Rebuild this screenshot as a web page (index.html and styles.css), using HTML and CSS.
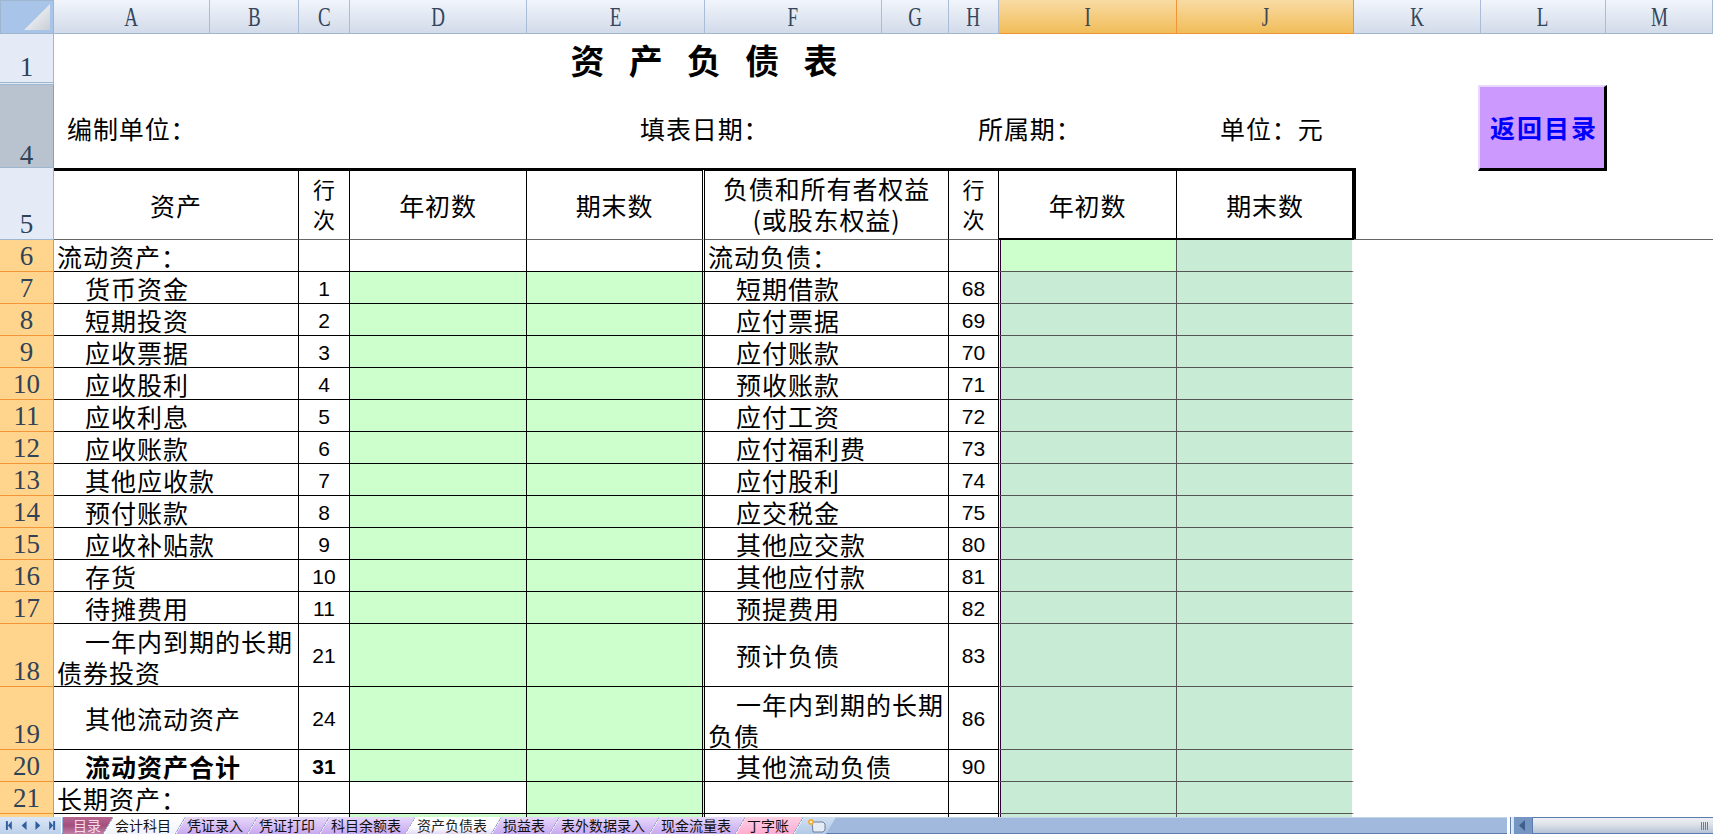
FILE: index.html
```html
<!DOCTYPE html>
<html lang="zh-CN">
<head>
<meta charset="utf-8">
<title>资产负债表</title>
<link rel="stylesheet" href="styles.css">
</head>
<body>
<div class="app">
  <div class="sheet">
    <div class="row row-cols">
      <div class="corner"><svg class="corner-mark" width="26" height="26" viewBox="0 0 26 26"><defs><linearGradient id="cg" x1="0" y1="0" x2="1" y2="1"><stop offset="0" stop-color="#ffffff"/><stop offset="1" stop-color="#c9ced6"/></linearGradient></defs><polygon points="26,0 26,26 0,26" fill="url(#cg)"/></svg></div>
      <div class="ch"><span>A</span></div><div class="ch"><span>B</span></div><div class="ch"><span>C</span></div><div class="ch"><span>D</span></div><div class="ch"><span>E</span></div><div class="ch"><span>F</span></div><div class="ch"><span>G</span></div><div class="ch"><span>H</span></div><div class="ch ch-sel"><span>I</span></div><div class="ch ch-sel"><span>J</span></div><div class="ch"><span>K</span></div><div class="ch"><span>L</span></div><div class="ch"><span>M</span></div>
    </div>

    <div class="row row-title">
      <div class="rh rh-split">1</div>
      <div class="title">资 产 负 债 表</div>
    </div>

    <div class="row row-info">
      <div class="rh rh-grey">4</div>
      <div class="info info-unit">编制单位：</div>
      <div class="info info-date">填表日期：</div>
      <div class="info info-period">所属期：</div>
      <div class="info info-yuan">单位：元</div>
      <div class="back">返回目录</div>
    </div>

    <div class="row row-head">
      <div class="rh">5</div>
      <div class="th s2">资产</div>
      <div class="th th-small">行<br>次</div>
      <div class="th">年初数</div>
      <div class="th th-e">期末数</div>
      <div class="th s2 th-two">负债和所有者权益<br>(或股东权益)</div>
      <div class="th th-small">行<br>次</div>
      <div class="th th-i">年初数</div>
      <div class="th th-j">期末数</div>
      <div class="th-tail"></div>
    </div>

    <div class="row"><div class="rh hi">6</div><div class="c s2 lab">流动资产：</div><div class="c no"></div><div class="c"></div><div class="c e"></div><div class="c s2 lab">流动负债：</div><div class="c no"></div><div class="c i g"></div><div class="c j"></div></div>
    <div class="row"><div class="rh hi">7</div><div class="c s2 ind">货币资金</div><div class="c no">1</div><div class="c g"></div><div class="c g e"></div><div class="c s2 ind">短期借款</div><div class="c no">68</div><div class="c i"></div><div class="c j"></div></div>
    <div class="row"><div class="rh hi">8</div><div class="c s2 ind">短期投资</div><div class="c no">2</div><div class="c g"></div><div class="c g e"></div><div class="c s2 ind">应付票据</div><div class="c no">69</div><div class="c i"></div><div class="c j"></div></div>
    <div class="row"><div class="rh hi">9</div><div class="c s2 ind">应收票据</div><div class="c no">3</div><div class="c g"></div><div class="c g e"></div><div class="c s2 ind">应付账款</div><div class="c no">70</div><div class="c i"></div><div class="c j"></div></div>
    <div class="row"><div class="rh hi">10</div><div class="c s2 ind">应收股利</div><div class="c no">4</div><div class="c g"></div><div class="c g e"></div><div class="c s2 ind">预收账款</div><div class="c no">71</div><div class="c i"></div><div class="c j"></div></div>
    <div class="row"><div class="rh hi">11</div><div class="c s2 ind">应收利息</div><div class="c no">5</div><div class="c g"></div><div class="c g e"></div><div class="c s2 ind">应付工资</div><div class="c no">72</div><div class="c i"></div><div class="c j"></div></div>
    <div class="row"><div class="rh hi">12</div><div class="c s2 ind">应收账款</div><div class="c no">6</div><div class="c g"></div><div class="c g e"></div><div class="c s2 ind">应付福利费</div><div class="c no">73</div><div class="c i"></div><div class="c j"></div></div>
    <div class="row"><div class="rh hi">13</div><div class="c s2 ind">其他应收款</div><div class="c no">7</div><div class="c g"></div><div class="c g e"></div><div class="c s2 ind">应付股利</div><div class="c no">74</div><div class="c i"></div><div class="c j"></div></div>
    <div class="row"><div class="rh hi">14</div><div class="c s2 ind">预付账款</div><div class="c no">8</div><div class="c g"></div><div class="c g e"></div><div class="c s2 ind">应交税金</div><div class="c no">75</div><div class="c i"></div><div class="c j"></div></div>
    <div class="row"><div class="rh hi">15</div><div class="c s2 ind">应收补贴款</div><div class="c no">9</div><div class="c g"></div><div class="c g e"></div><div class="c s2 ind">其他应交款</div><div class="c no">80</div><div class="c i"></div><div class="c j"></div></div>
    <div class="row"><div class="rh hi">16</div><div class="c s2 ind">存货</div><div class="c no">10</div><div class="c g"></div><div class="c g e"></div><div class="c s2 ind">其他应付款</div><div class="c no">81</div><div class="c i"></div><div class="c j"></div></div>
    <div class="row"><div class="rh hi">17</div><div class="c s2 ind">待摊费用</div><div class="c no">11</div><div class="c g"></div><div class="c g e"></div><div class="c s2 ind">预提费用</div><div class="c no">82</div><div class="c i"></div><div class="c j"></div></div>
    <div class="row row-tall"><div class="rh hi">18</div><div class="c s2 ind wrap">一年内到期的长期债券投资</div><div class="c no">21</div><div class="c g"></div><div class="c g e"></div><div class="c s2 ind mid">预计负债</div><div class="c no">83</div><div class="c i"></div><div class="c j"></div></div>
    <div class="row row-tall"><div class="rh hi">19</div><div class="c s2 ind mid">其他流动资产</div><div class="c no">24</div><div class="c g"></div><div class="c g e"></div><div class="c s2 ind wrap">一年内到期的长期负债</div><div class="c no">86</div><div class="c i"></div><div class="c j"></div></div>
    <div class="row"><div class="rh hi">20</div><div class="c s2 ind bold">流动资产合计</div><div class="c no bold">31</div><div class="c g"></div><div class="c g e"></div><div class="c s2 ind">其他流动负债</div><div class="c no">90</div><div class="c i"></div><div class="c j"></div></div>
    <div class="row"><div class="rh hi">21</div><div class="c s2 lab">长期资产：</div><div class="c no"></div><div class="c"></div><div class="c g e"></div><div class="c s2 lab"></div><div class="c no"></div><div class="c i"></div><div class="c j"></div></div>
    <div class="row"><div class="rh hi"></div><div class="c s2 lab"></div><div class="c no"></div><div class="c g"></div><div class="c g e"></div><div class="c s2 lab"></div><div class="c no"></div><div class="c i"></div><div class="c j"></div></div>
  </div>

  <div class="statusbar">
    <div class="nav">
      <svg width="62" height="17" viewBox="0 0 62 17"><g fill="#2f5e9e"><rect x="6" y="4" width="2" height="9"/><polygon points="12,4 12,13 8,8.5"/><polygon points="27,4 27,13 22,8.5"/><polygon points="36,4 36,13 41,8.5"/><polygon points="50,4 50,13 54,8.5"/><rect x="54" y="4" width="2" height="9"/></g></svg>
    </div>
    <div class="tabs">
      <div class="tab tab-first">目录</div>
      <div class="tab tab-white">会计科目</div>
      <div class="tab tab-lav">凭证录入</div>
      <div class="tab tab-lav">凭证打印</div>
      <div class="tab tab-lav">科目余额表</div>
      <div class="tab tab-active">资产负债表</div>
      <div class="tab tab-lav">损益表</div>
      <div class="tab tab-lav">表外数据录入</div>
      <div class="tab tab-lav">现金流量表</div>
      <div class="tab tab-pink">丁字账</div>
      <div class="tab tab-new"><svg width="24" height="15" viewBox="0 0 24 15"><path d="M8 4h11l2 2v6l-2 2H9z" fill="#e4ecf6" stroke="#6f7f96"/><circle cx="7" cy="4" r="3" fill="#f0b040"/><circle cx="7" cy="4" r="1" fill="#fff"/></svg></div>
    </div>
    <div class="strip"></div>
    <div class="split"></div>
    <div class="scroll-left"><svg width="18" height="17" viewBox="0 0 18 17"><polygon points="11,3 11,14 5,8.5" fill="#3f5f8c"/></svg></div>
    <div class="track"><svg class="grip" width="8" height="8" viewBox="0 0 8 8"><path d="M0.5 0v8M2.5 0v8M4.5 0v8M6.5 0v8" stroke="#6f7f90"/></svg></div>
  </div>
</div>
</body>
</html>
```

FILE: styles.css
```css
html, body { margin: 0; padding: 0; background: #fff; }
body { overflow: hidden; font-family: "Noto Sans CJK SC", "Liberation Sans", sans-serif; color: #000; }
.app { width: 1713px; height: 834px; display: flex; flex-direction: column; overflow: hidden; }
.sheet { flex: 1; min-height: 0; overflow: hidden; background: #fff; }

.row {
  display: grid;
  grid-template-columns: 54px 156px 89px 51px 177px 178px 177px 67px 50px 178px 177px 127px 125px 107px;
  grid-template-rows: minmax(0, 1fr);
  height: 32px;
}
.row-cols { height: 34px; }
.row-title { height: 51px; }
.row-info { height: 83px; }
.row-head { height: 72px; }
.row-tall { height: 63px; }

/* column headers */
.corner {
  background: #a9c4e9; border: 1px solid #9eb6ce;
  box-sizing: border-box; display: flex; align-items: flex-end; justify-content: flex-end; padding: 0 3px 3px 0;
}
.corner-mark { display: block; }
.ch {
  box-sizing: border-box; border-right: 1px solid #a9bdd8; border-bottom: 1px solid #9eb6ce;
  background: linear-gradient(#f1f5fb, #d2dbea);
  display: flex; align-items: center; justify-content: center;
  font-family: "Liberation Serif", serif; font-size: 28px; color: #33465c; line-height: 34px;
}
.ch span { display: block; transform: scaleX(.68); }
.ch-sel { background: linear-gradient(#f8dba4, #f1bd59); border-right-color: #f29536; border-bottom-color: #f29536; color: #3b4652; }

/* row headers */
.rh {
  box-sizing: border-box; background: #e4ebf7; border-right: 1px solid #9eb6ce; border-bottom: 1px solid #9eb6ce;
  display: flex; align-items: flex-end; justify-content: center;
  font-family: "Liberation Serif", serif; font-size: 27px; line-height: 27px; color: #2f4258; padding-bottom: 1px;
}
.rh-split { border-bottom: 3px double #9eb6ce; padding-bottom: 1px; }
.rh-grey { background: #b9c3cf; border-right-color: #8d9dae; line-height: 21px; }
.hi { background: #ffd58d; border-right-color: #f29536; border-bottom-color: #f29536; }

/* title + info rows */
.title {
  grid-column: 2 / 12; text-align: center; font-weight: 700; font-size: 34px; line-height: 52px;
  word-spacing: 16.5px;
}
.info { font-size: 25px; letter-spacing: .9px; line-height: 30px; padding-top: 28px; white-space: nowrap; }
.info-unit { grid-column: 2 / 5; padding-left: 13px; }
.info-date { grid-column: 6 / 7; padding-left: 113px; }
.info-period { grid-column: 9 / 11; padding-left: 29px; }
.info-yuan { grid-column: 11 / 12; padding-left: 43px; }
.back {
  grid-column: 13 / 14; margin: 0 -1px -3px -3px; box-sizing: border-box; position: relative; z-index: 2;
  background: #cc99ff; border-style: solid; border-width: 2px 3px 3px 2px;
  border-color: #e6d8ff #000 #000 #e6d8ff;
  display: flex; align-items: center; justify-content: center; padding: 0 0 2px 4px;
  color: #0000ff; font-weight: 700; font-size: 25px; letter-spacing: 2px; white-space: nowrap;
}

/* table head */
.th {
  box-sizing: border-box; border-top: 3px solid #000; border-right: 1px solid #000; border-bottom: 1px solid #666;
  display: flex; align-items: center; justify-content: center; text-align: center;
  font-size: 25px; letter-spacing: .9px; line-height: 32px;
}
.th-small { font-size: 22px; line-height: 30px; letter-spacing: 0; padding-bottom: 5px; }
.th-two { padding-bottom: 3px; line-height: 31px; }
.th-e { border-right: 3px double #000; }
.th-i, .th-j { border-bottom: 2px solid #000; }
.th-j { border-right: 1px solid #000; box-shadow: inset -1px 0 0 #000, 2px 0 0 #000; }
.th-tail { grid-column: 12 / 15; border-bottom: 1px solid #666; }

/* data cells */
.s2 { grid-column: span 2; }
.c {
  box-sizing: border-box; border-right: 1px solid #000; border-bottom: 1px solid #000;
  font-size: 25px; letter-spacing: 1px; line-height: 29px; white-space: nowrap;
  display: flex; align-items: flex-end;
}
.lab { padding-left: 3px; }
.ind { padding-left: 31px; }
.mid { align-items: center; }
.wrap { display: block; white-space: normal; padding: 2px 0 0 3px; text-indent: 28px; line-height: 31px; }
.bold { font-weight: 700; }
.no {
  font-family: "Liberation Sans", sans-serif; font-size: 21px; letter-spacing: 0;
  align-items: center; justify-content: center; line-height: 24px; padding-top: 2px;
}
.g { background: #ccffcc; }
.e { border-right: 3px double #000; }
.i, .j { background: #c8ebd5; border-right-color: #555; border-bottom-color: #555; }
.i { border-left: 1px solid #fff; box-shadow: inset 1px 0 0 #303; }
.i.g { background: #ccffcc; }
.j { border-right: 2px solid #fff; }

/* bottom bar */
.statusbar {
  height: 17px; flex: none; display: flex; background: #a0b9dc;
  box-shadow: inset 0 -1px 0 #5b7cad, inset 0 1px 0 #c3d3ea;
}
.nav { width: 62px; flex: none; background: linear-gradient(#dbe7f7, #bcd0ea); border-right: 1px solid #fff; box-sizing: border-box; display: flex; }
.nav svg { display: block; }
.tabs { display: flex; flex: none; padding-left: 1px; }
.tab {
  height: 17px; box-sizing: border-box; margin-right: -10px; padding: 0 14px 0 12px; position: relative;
  font-size: 14px; line-height: 17px; white-space: nowrap; color: #111;
  clip-path: polygon(0 100%, 10px 0, 100% 0, calc(100% - 10px) 100%);
  display: flex; align-items: center;
}
.tab::before {
  content: ""; position: absolute; left: 0; top: 0; width: 10px; height: 100%;
  background: linear-gradient(to bottom right, transparent calc(50% - 1px), #8a9fc4 calc(50% - 1px), #8a9fc4 calc(50% + .5px), #fff calc(50% + .5px), transparent calc(50% + 1.5px));
}
.tab-first {
  padding: 0 12px 0 10px; color: #f4d9e8;
  clip-path: polygon(0 0, 100% 0, calc(100% - 10px) 100%, 0 100%);
  background: linear-gradient(#b8658f, #a24f7e 50%, #c07fa6);
}
.tab-first::before { display: none; }
.tab-white { background: linear-gradient(#fff, #f2f3fa); }
.tab-lav { background: linear-gradient(#e7d8fb, #c8a9ef); }
.tab-active { background: linear-gradient(#fff 60%, #e2d9f6); color: #222; }
.tab-pink { background: linear-gradient(#ffd0e4, #ffacd0); }
.tab-new { background: linear-gradient(#cfdff3, #b3c9e6); width: 43px; padding: 0 0 0 11px; }
.tab-new svg { display: block; }
.strip { flex: 1; }
.split { width: 7px; flex: none; background: linear-gradient(90deg, #fff, #cfe0f5); box-shadow: inset 3px 0 0 #fff, inset 4px 0 0 #5e7fae; }
.scroll-left { width: 18px; flex: none; background: #7596c2; }
.scroll-left svg { display: block; }
.track {
  width: 181px; flex: none; box-sizing: border-box; border-top: 1px solid #5b7cad; border-bottom: 1px solid #5b7cad; border-left: 1px solid #5b7cad;
  background: linear-gradient(#eef0f4, #dfe3ea 40%, #b5c3d6);
  display: flex; align-items: center; justify-content: flex-end; padding-right: 4px;
}
.grip { display: block; }
```
